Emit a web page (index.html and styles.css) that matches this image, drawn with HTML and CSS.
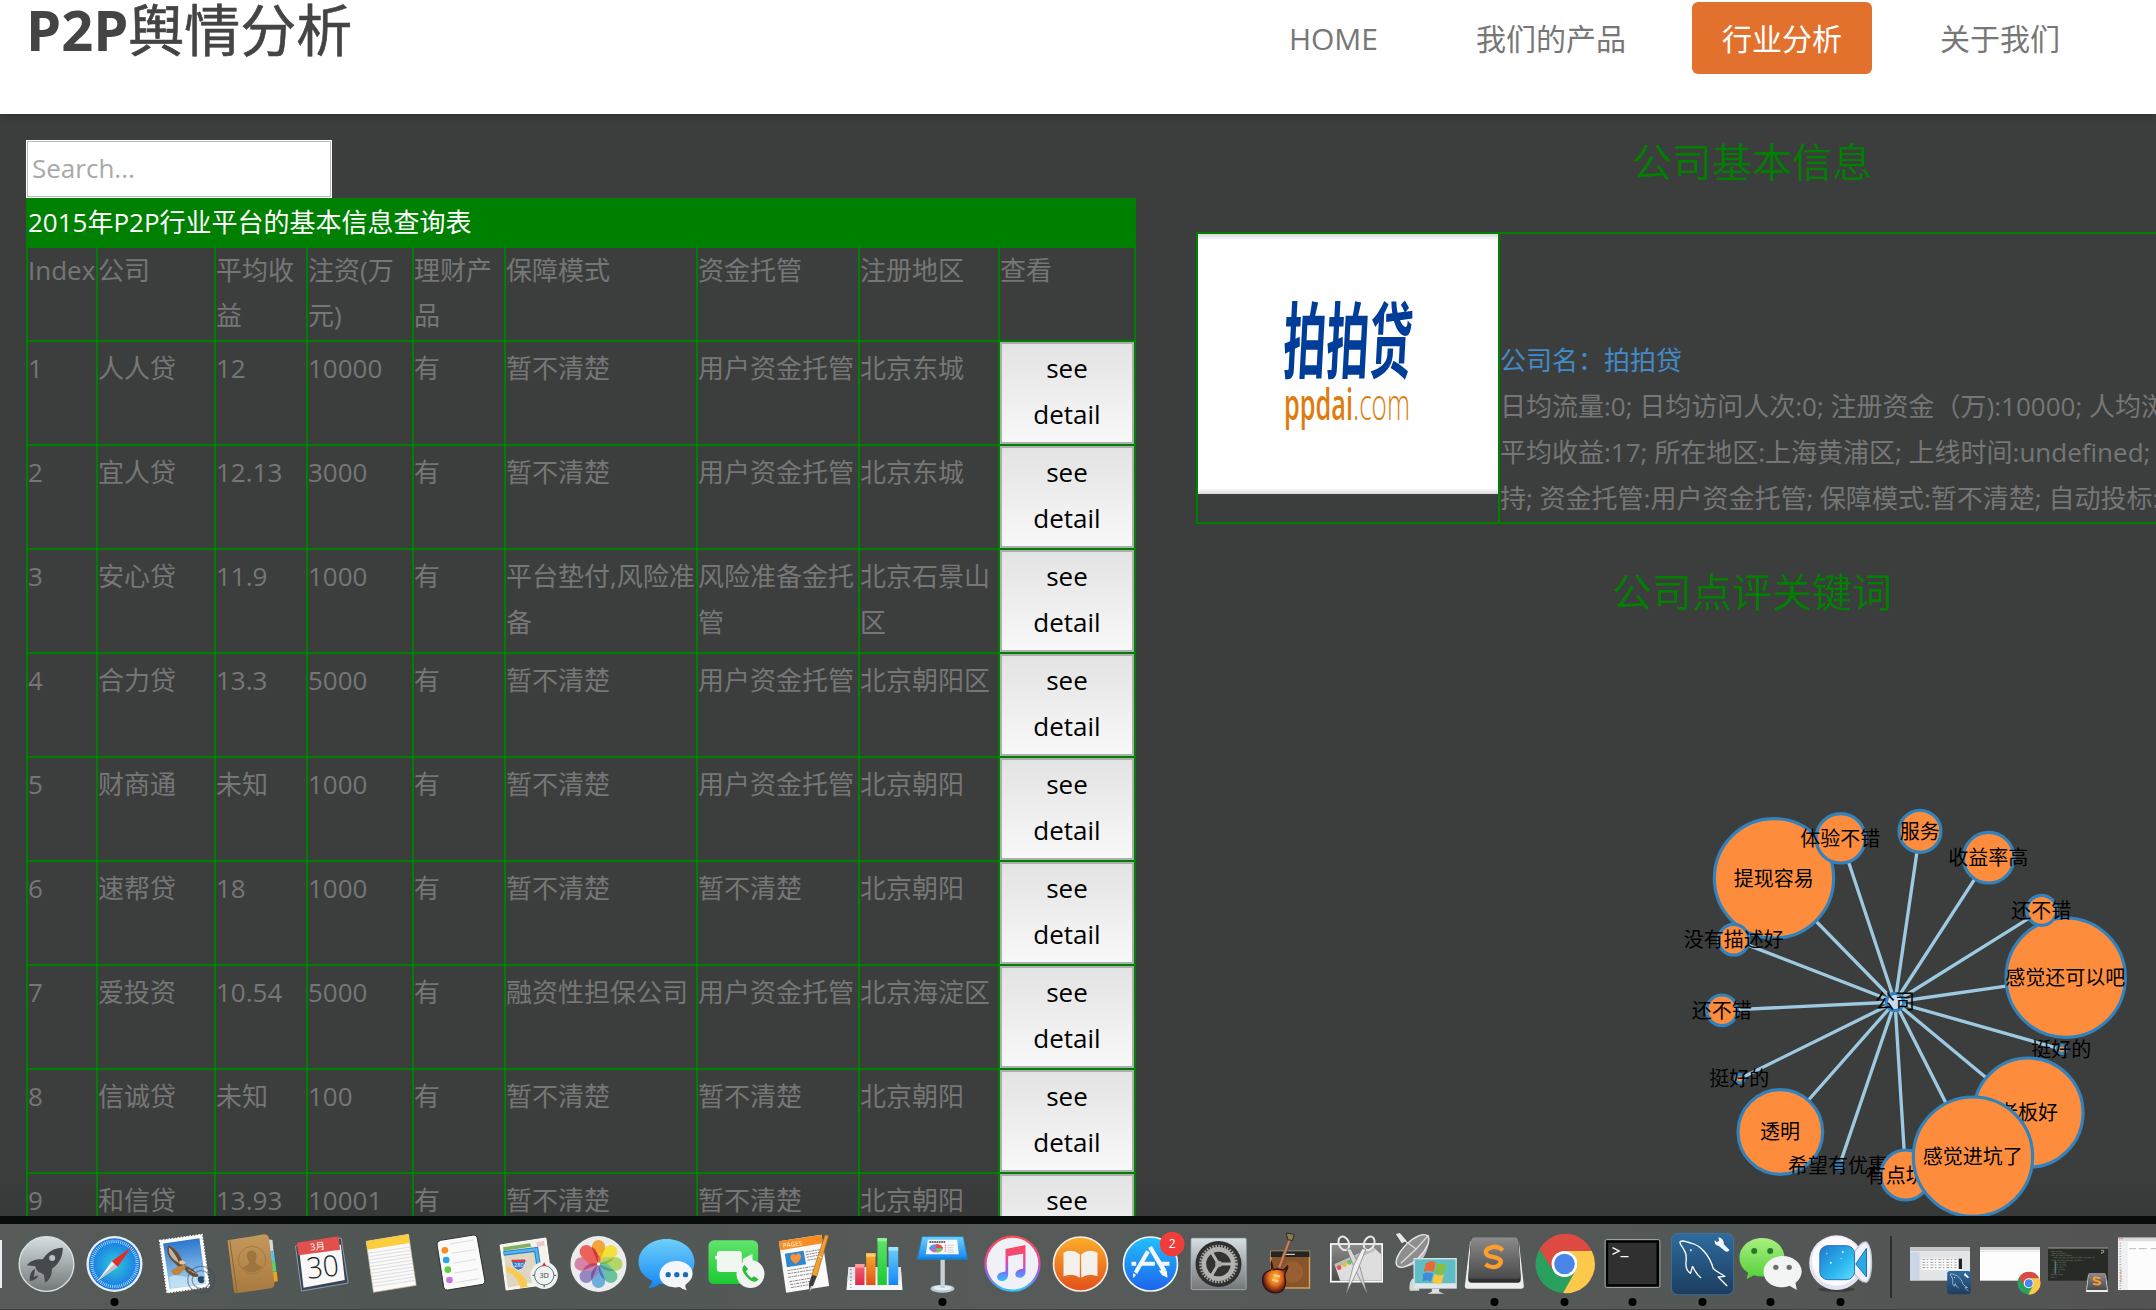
FILE: index.html
```html
<!DOCTYPE html>
<html lang="zh-CN">
<head>
<meta charset="utf-8">
<title>P2P舆情分析</title>
<link rel="stylesheet" href="styles.css">
</head>
<body>
<div class="window">
<header class="header">
  <h1 class="brand"><b>P2P</b>舆情分析</h1>
  <nav class="nav"><a class="home">HOME</a><a>我们的产品</a><a class="active">行业分析</a><a>关于我们</a></nav>
</header>
<main class="main">
  <section class="list">
    <input class="search" type="text" placeholder="Search...">
    <table class="grid">
      <colgroup><col class="c1"><col class="c2"><col class="c3"><col class="c4"><col class="c5"><col class="c6"><col class="c7"><col class="c8"><col class="c9"></colgroup>
      <tr class="title"><td colspan="9">2015年P2P行业平台的基本信息查询表</td></tr>
      <tr class="head"><td>Index</td><td>公司</td><td>平均收益</td><td>注资(万元)</td><td>理财产品</td><td>保障模式</td><td>资金托管</td><td>注册地区</td><td>查看</td></tr>
      <tr><td>1</td><td>人人贷</td><td>12</td><td>10000</td><td>有</td><td>暂不清楚</td><td>用户资金托管</td><td>北京东城</td><td class="act"><button>see<br>detail</button></td></tr>
      <tr><td>2</td><td>宜人贷</td><td>12.13</td><td>3000</td><td>有</td><td>暂不清楚</td><td>用户资金托管</td><td>北京东城</td><td class="act"><button>see<br>detail</button></td></tr>
      <tr><td>3</td><td>安心贷</td><td>11.9</td><td>1000</td><td>有</td><td>平台垫付,风险准备</td><td>风险准备金托管</td><td>北京石景山区</td><td class="act"><button>see<br>detail</button></td></tr>
      <tr><td>4</td><td>合力贷</td><td>13.3</td><td>5000</td><td>有</td><td>暂不清楚</td><td>用户资金托管</td><td>北京朝阳区</td><td class="act"><button>see<br>detail</button></td></tr>
      <tr><td>5</td><td>财商通</td><td>未知</td><td>1000</td><td>有</td><td>暂不清楚</td><td>用户资金托管</td><td>北京朝阳</td><td class="act"><button>see<br>detail</button></td></tr>
      <tr><td>6</td><td>速帮贷</td><td>18</td><td>1000</td><td>有</td><td>暂不清楚</td><td>暂不清楚</td><td>北京朝阳</td><td class="act"><button>see<br>detail</button></td></tr>
      <tr><td>7</td><td>爱投资</td><td>10.54</td><td>5000</td><td>有</td><td>融资性担保公司</td><td>用户资金托管</td><td>北京海淀区</td><td class="act"><button>see<br>detail</button></td></tr>
      <tr><td>8</td><td>信诚贷</td><td>未知</td><td>100</td><td>有</td><td>暂不清楚</td><td>暂不清楚</td><td>北京朝阳</td><td class="act"><button>see<br>detail</button></td></tr>
      <tr><td>9</td><td>和信贷</td><td>13.93</td><td>10001</td><td>有</td><td>暂不清楚</td><td>暂不清楚</td><td>北京朝阳</td><td class="act"><button>see<br>detail</button></td></tr>
    </table>
  </section>
  <section class="detail">
    <h2>公司基本信息</h2>
    <div class="card">
      <div class="pic">
        <svg width="300" height="260" viewBox="0 0 300 260">
          <g transform="translate(84 138) skewX(-3) scale(1 1.9)"><text class="logo-cn" x="0" y="0" font-size="44" textLength="129" lengthAdjust="spacingAndGlyphs">拍拍贷</text></g>
          <text class="logo-en" x="86" y="186" font-size="44" font-weight="600" textLength="69" lengthAdjust="spacingAndGlyphs">ppdai</text>
          <text class="logo-en" x="155" y="186" font-size="44" font-weight="300" textLength="57" lengthAdjust="spacingAndGlyphs">.com</text>
        </svg>
      </div>
      <div class="info">
        <a>公司名：拍拍贷</a>
        <p>日均流量:0; 日均访问人次:0; 注册资金（万):10000; 人均浏览</p>
        <p>平均收益:17; 所在地区:上海黄浦区; 上线时间:undefined; </p>
        <p>持; 资金托管:用户资金托管; 保障模式:暂不清楚; 自动投标:支</p>
      </div>
    </div>
    <h2 class="second">公司点评关键词</h2>
    <svg class="graph" width="496" height="426" viewBox="0 0 1488 1278">
      <g class="link">
        <path d="M705 636L342 265M705 636L542 145M705 636L780 124M705 636L986 203M705 636L1145 361M705 636L1217 563M705 636L1205 778M705 636L1105 968M705 636L939 1100M705 636L737 1155M705 636L538 1127M705 636L361 1026M705 636L239 866M705 636L186 661M705 636L221 449"/>
      </g>
      <g class="node">
        <circle class="hub" cx="705" cy="636" r="26"/><text x="705" y="657">公司</text>
        <circle cx="342" cy="265" r="179"/><text x="341" y="288">提现容易</text>
        <circle cx="542" cy="145" r="74"/><text x="541" y="168">体验不错</text>
        <circle cx="780" cy="124" r="63"/><text x="779" y="147">服务</text>
        <circle cx="986" cy="203" r="76"/><text x="985" y="226">收益率高</text>
        <circle cx="1217" cy="563" r="179"/><text x="1216" y="586">感觉还可以吧</text>
        <circle cx="1145" cy="361" r="45"/><text x="1144" y="384">还不错</text>
        <circle cx="1205" cy="778" r="13"/><text x="1204" y="801">挺好的</text>
        <circle cx="1105" cy="968" r="164"/><text x="1104" y="991">老板好</text>
        <circle cx="361" cy="1026" r="127"/><text x="360" y="1047">透明</text>
        <circle cx="239" cy="866" r="13"/><text x="238" y="889">挺好的</text>
        <circle cx="186" cy="661" r="46"/><text x="185" y="684">还不错</text>
        <circle cx="221" cy="449" r="46"/><text x="221" y="472">没有描述好</text>
        <circle class="spot" cx="538" cy="1127" r="12"/><text x="534" y="1150">希望有优惠</text>
        <circle cx="737" cy="1155" r="75"/><text x="737" y="1178">有点坑爹</text>
        <circle cx="939" cy="1100" r="179"/><text x="938" y="1123">感觉进坑了</text>
      </g>
    </svg>
  </section>
</main>
</div>
<footer class="dock">
<svg width="0" height="0" class="defs"><defs>
  <linearGradient id="silver" x2="0" y2="1"><stop stop-color="#d5dfe2"/><stop offset="1" stop-color="#737778"/></linearGradient>
  <radialGradient id="safari"><stop stop-color="#2cc9dc"/><stop offset="1" stop-color="#1b74e4"/></radialGradient>
  <linearGradient id="sky" x2="0" y2="1"><stop stop-color="#2d78cd"/><stop offset="1" stop-color="#a9d4f2"/></linearGradient>
  <linearGradient id="tan" x2="0" y2="1"><stop stop-color="#c4975a"/><stop offset="1" stop-color="#a97a40"/></linearGradient>
  <linearGradient id="blue" x2="0" y2="1"><stop stop-color="#6fd0fa"/><stop offset="1" stop-color="#1487f6"/></linearGradient>
  <linearGradient id="green" x2="0" y2="1"><stop stop-color="#62e46c"/><stop offset="1" stop-color="#1bc933"/></linearGradient>
  <linearGradient id="orange" x2="0" y2="1"><stop stop-color="#fbae2a"/><stop offset="1" stop-color="#e0501a"/></linearGradient>
  <linearGradient id="red" x2="0" y2="1"><stop stop-color="#f26673"/><stop offset="1" stop-color="#e02a45"/></linearGradient>
  <linearGradient id="tune" x2="0" y2="1"><stop stop-color="#fb4a55"/><stop offset=".45" stop-color="#e94b9b"/><stop offset=".7" stop-color="#8d62f3"/><stop offset="1" stop-color="#29c6f8"/></linearGradient>
  <linearGradient id="store" x2="0" y2="1"><stop stop-color="#22c0f9"/><stop offset="1" stop-color="#1d63ee"/></linearGradient>
  <linearGradient id="navy" x2="0" y2="1"><stop stop-color="#2f6b9e"/><stop offset="1" stop-color="#1c3d5f"/></linearGradient>
  <linearGradient id="key" x2="0" y2="1"><stop stop-color="#8b8b8b"/><stop offset="1" stop-color="#4a4a4a"/></linearGradient>
  <radialGradient id="burst"><stop stop-color="#ffc02e"/><stop offset=".5" stop-color="#e8701f"/><stop offset="1" stop-color="#4e1410"/></radialGradient>
  <linearGradient id="lime" x2="0" y2="1"><stop stop-color="#a8f080"/><stop offset="1" stop-color="#54cf38"/></linearGradient>
  <linearGradient id="aqua" x2="1" y2="1"><stop stop-color="#1d78cc"/><stop offset=".6" stop-color="#2cb7ee"/><stop offset="1" stop-color="#5de0fa"/></linearGradient>
  <g id="dolphin" fill="none" stroke="#fff" stroke-width="4" stroke-linecap="round" stroke-linejoin="round"><path d="M72 93C67 79 55 73 59 65C67 58 80 68 94 70C121 76 148 108 158 145C166 155 181 160 193 169L173 171L199 197M72 93C78 100 78 108 77 121C74 143 82 155 90 160L96 139C103 154 109 164 121 173"/><circle cx="91" cy="91" r="1"/></g>
  <g id="chrome"><circle cx="912" cy="192" r="87" fill="#2aa05e"/><path d="M837 149A87 87 0 0 1 994 153L912 153L878 211Z" fill="#dc4a42"/><path d="M994 153A87 87 0 0 1 908 279L946 211A39 39 0 0 0 912 153Z" fill="#fdc94a"/><circle cx="912" cy="192" r="39" fill="#fff"/><circle cx="912" cy="192" r="31" fill="#4a86ea"/></g>
</defs></svg>
<span class="edge"></span>
<svg class="app" viewBox="34.5 72 207 258"><circle cx="138" cy="192" r="82" fill="url(#silver)" stroke="#d6e2e5" stroke-width="4"/><path d="M187 143C157 144 139 158 127 178C105 177 90 182 79 196L104 199C108 211 112 217 122 219L130 224L134 248C149 238 154 226 154 207C175 192 187 171 187 143ZM104 206C88 213 87 232 88 243C101 242 110 237 114 226L100 231Z" fill="#45494d"/><circle cx="155" cy="174" r="9" fill="#b9c2c5"/></svg>
<svg class="app" viewBox="241.5 72 207 258"><circle cx="342" cy="192" r="84" fill="#e8f0f4"/><circle cx="342" cy="192" r="77" fill="url(#safari)"/><circle cx="342" cy="192" r="68" fill="none" stroke="#c7efff" stroke-width="10" stroke-dasharray="2 3.9"/><path d="M393 141L334 184L351 201Z" fill="#e32b2b"/><path d="M291 243L334 184L351 201Z" fill="#eee"/><path d="M291 243L351 201L342 192Z" fill="#b9bfc4"/><circle class="dot" cx="342" cy="306" r="12"/></svg>
<svg class="app" viewBox="448.5 72 207 258"><g transform="rotate(-8 552 191)"><path d="M488 112H616V270H488Z" fill="#fff" stroke="#fff" stroke-width="5" stroke-dasharray="5 4"/><path d="M497 122H607V260H497Z" fill="url(#sky)"/></g><path d="M505 232C530 214 552 240 575 226C598 222 612 240 618 250L512 264Z" fill="#d7ecf8" opacity=".6"/><path d="M503 136C495 157 506 176 525 191L538 205C548 202 553 206 557 214C573 231 585 233 595 229C588 215 571 203 556 198L547 186C537 162 525 145 503 136Z" fill="#6d4a2b"/><path d="M506 142C519 156 530 171 536 190L521 180C508 169 503 155 506 142Z" fill="#b9b6ae"/><path d="M510 212L537 198L552 194L556 203L536 224L520 225Z" fill="#bd8444"/><path d="M536 183L546 181L556 188L549 194L537 192Z" fill="#e2c9a0"/><path d="M588 222L564 209" stroke="#b59c7b" stroke-width="4"/><g fill="none" stroke="#334b63" stroke-width="4" opacity=".5"><circle cx="602" cy="239" r="40"/><circle cx="602" cy="239" r="27"/></g><path d="M602 229C592 226 590 236 593 244C597 252 608 252 612 243C606 237 612 232 611 230Z" fill="#24486b"/></svg>
<svg class="app" viewBox="655.5 72 207 258"><path d="M804 118L816 120L819 154H804Z" fill="#d8dadb"/><path d="M806 154H820L824 185H808Z" fill="#5ac2e8"/><path d="M810 185L824 184L828 215H812Z" fill="#5cd26b"/><path d="M814 216H829L832 244L815 247Z" fill="#f0a31d"/><path d="M681 121L790 103Q803 103 805 114L822 250Q822 263 811 265L705 280Q701 279 700 272Z" fill="url(#tan)"/><path d="M688 121L710 278" stroke="#8e6534" stroke-width="3"/><circle cx="755" cy="180" r="41" fill="none" stroke="#a47940" stroke-width="3"/><path d="M755 152C741 151 737 162 740 174Q743 184 747 187Q746 195 725 203Q753 232 787 201Q767 195 764 186Q776 155 755 152Z" fill="#9d753f"/></svg>
<svg class="app" viewBox="862.5 72 207 258"><path d="M885 138L1022 114L1043 249L903 273Z" fill="#394552" stroke="#8d9dac" stroke-width="3"/><path d="M896 150L1021 134L1033 240L909 263Z" fill="#f8f8f8"/><path d="M889 128L1014 109L1019 149L894 166Z" fill="#e2504c"/><g transform="rotate(-7 955 180)"><text class="glyph" x="956" y="149" font-size="28" fill="#fff">3月</text><text class="glyph" x="964" y="233" font-size="88" font-weight="300" fill="#222" textLength="96" lengthAdjust="spacingAndGlyphs">30</text></g></svg>
<svg class="app" viewBox="1069.5 72 207 258"><path d="M1097 124L1224 103L1247 256L1119 277Z" fill="#fafafa" stroke="#d5c6a1" stroke-width="2"/><path d="M1097 124L1223 103L1228 129L1101 149Z" fill="#fccd3c"/><path d="M1102 160L1229 141M1103 170L1230 151M1105 180L1232 161M1106 190L1233 171M1108 200L1235 181M1109 210L1236 191M1111 220L1238 201M1112 230L1239 211M1114 240L1241 221M1115 250L1242 231M1117 260L1244 241" stroke="#cfcfcf" stroke-width="2"/></svg>
<svg class="app" viewBox="16.5 72 207 258"><path d="M60 121L159 105Q168 104 170 113L193 241Q194 250 187 253L82 270Q73 272 70 263L50 136Q49 125 60 121Z" fill="#fafafa" stroke="#2f3130" stroke-width="3"/><g stroke="#cecece" stroke-width="2"><path d="M89 132L159 120M93 160L164 149M97 190L167 178M101 219L171 208M105 248L176 236"/></g><circle cx="73" cy="151" r="10" fill="#fb8c20"/><circle cx="77" cy="180" r="10" fill="#24a4f3"/><circle cx="82" cy="209" r="10" fill="#5ed03d"/><circle cx="87" cy="240" r="10" fill="#cb72e0"/></svg>
<svg class="app" viewBox="223.5 72 207 258"><path d="M239 135L376 114L395 251L257 270Z" fill="#f5f2e9" stroke="#fff" stroke-width="3"/><path d="M248 142L329 130L332 140L249 153Z" fill="#7fb262"/><path d="M347 127L370 123L372 137L350 140Z" fill="#f0c5c9"/><path d="M251 164L352 149L368 239L262 263Z" fill="#ded5c2"/><path d="M249 160L347 148L359 227" fill="none" stroke="#2585c6" stroke-width="14"/><path d="M249 160L347 148L359 227" fill="none" stroke="#55b6ef" stroke-width="7"/><path d="M256 199Q289 203 317 239L321 261L300 264C289 234 278 219 259 216Z" fill="#f8cb50"/><path d="M273 179L315 177Q316 207 294 211Q274 206 273 179Z" fill="#3976c6" stroke="#fff" stroke-width="2"/><path d="M273 179H315V186H273Z" fill="#dd3e3e"/><text class="glyph" x="295" y="202" font-size="17" fill="#fff">280</text><circle cx="371" cy="226" r="41" fill="#f1f2f2"/><circle cx="371" cy="226" r="29" fill="none" stroke="#5f7781" stroke-width="3"/><path d="M365 197L371 187L377 197Z" fill="#e22"/><path d="M371 255V262M336 226H341M401 226H407" stroke="#444" stroke-width="3"/><text class="glyph" x="371" y="234" font-size="22" fill="#444">3D</text></svg>
<svg class="app" viewBox="430.5 72 207 258"><circle cx="534" cy="192" r="84" fill="#eaeced"/><g opacity=".87"><rect x="514" y="120" width="40" height="72" rx="20" fill="#f79a21"/><rect x="514" y="120" width="40" height="72" rx="20" fill="#f4df24" transform="rotate(45 534 192)"/><rect x="514" y="120" width="40" height="72" rx="20" fill="#add356" transform="rotate(90 534 192)"/><rect x="514" y="120" width="40" height="72" rx="20" fill="#5abc8d" transform="rotate(135 534 192)"/><rect x="514" y="120" width="40" height="72" rx="20" fill="#5ca4da" transform="rotate(180 534 192)"/><rect x="514" y="120" width="40" height="72" rx="20" fill="#8979bd" transform="rotate(225 534 192)"/><rect x="514" y="120" width="40" height="72" rx="20" fill="#d5749c" transform="rotate(270 534 192)"/><rect x="514" y="120" width="40" height="72" rx="20" fill="#ed4e45" transform="rotate(315 534 192)"/></g><g opacity=".55"><path d="M534 192L514 144V140Q534 148 534 192Z" fill="#a31a12"/><path d="M534 192L554 144Q534 148 534 192Z" fill="#f08a00"/><path d="M534 192L582 172Q570 196 534 192Z" fill="#87a91b"/><path d="M534 192L582 212Q550 218 534 192Z" fill="#318a4a"/><path d="M534 192L554 240Q532 228 534 192Z" fill="#185a9a"/><path d="M534 192L514 240Q504 214 534 192Z" fill="#483b91"/><path d="M534 192L486 212Q500 182 534 192Z" fill="#8d2a72"/></g><circle cx="534" cy="192" r="5" fill="#fff"/></svg>
<svg class="app" viewBox="637.5 72 207 258"><path d="M738 117C692 117 654 147 654 186C654 211 670 231 695 242Q695 253 684 264Q705 262 717 251C776 262 822 231 822 184C820 145 784 117 738 117Z" fill="url(#blue)"/><path d="M768 183C739 183 717 202 717 226C718 251 746 267 778 261Q788 270 799 271Q793 263 795 254C834 229 816 184 768 183Z" fill="#f3f6fa"/><g fill="#1c6db6"><circle cx="743" cy="224" r="8"/><circle cx="769" cy="224" r="8"/><circle cx="795" cy="224" r="8"/></g></svg>
<svg class="app" viewBox="844.5 72 207 258"><rect x="864" y="121" width="149" height="131" rx="16" fill="url(#green)"/><rect x="889" y="153" width="75" height="63" rx="10" fill="#f0f6f0"/><path d="M967 177L996 161V207L967 193ZM884 168H890V178H884Z" fill="#f0f6f0"/><circle cx="990" cy="222" r="42" fill="#f1f5f1"/><path d="M972 195C960 205 967 219 981 233C993 245 1006 250 1014 238L1001 229L993 234Q982 226 976 214L983 207Z" fill="#29bd3c"/></svg>
<svg class="app" viewBox="1051.5 72 207 258"><path d="M1075 124L1203 104L1226 258L1097 278Z" fill="#fafafa"/><path d="M1075 124L1203 104L1207 130L1080 151Z" fill="#f78d23"/><text class="glyph" x="1116" y="140" font-size="19" font-weight="600" fill="#ffe6c9" transform="rotate(-7 1116 136)">PAGES</text><path d="M1093 161L1149 152L1157 193L1099 202Z" fill="#3187cf"/><path d="M1126 192Q1106 181 1111 165Q1119 158 1125 166Q1135 152 1142 168Q1141 181 1126 192Z" fill="#f5943a"/><path d="M1155 156L1205 148M1156 164L1203 156M1158 172L1200 164M1161 181L1195 175M1101 212L1184 198M1102 221L1180 209M1103 232L1177 220M1106 245L1174 234M1109 254L1169 244M1111 263L1164 254" stroke="#8b8b8b" stroke-width="3" stroke-dasharray="9 2 5 2"/><path d="M1214 104L1224 107L1189 229L1174 225Z" fill="#f0a132" stroke="#a66318" stroke-width="2"/><path d="M1174 225L1189 229L1179 255L1167 275L1165 252Z" fill="#3b3c3e"/><path d="M1171 258L1178 259L1167 276Z" fill="#ddd"/><path d="M1195 169L1205 173" stroke="#eee" stroke-width="3"/></svg>
<svg class="app" viewBox="-1.5 72 207 258"><path d="M24 202H181L186 270H18Z" fill="#f6f7f8"/><path d="M24 202H181L183 240H21Z" fill="#e2e5e8"/><path d="M31 207V264" stroke="#999" stroke-width="5" stroke-dasharray="4 7"/><rect x="44" y="192" width="28" height="63" fill="url(#red)"/><rect x="77" y="160" width="28" height="95" fill="url(#orange)"/><rect x="111" y="114" width="28" height="141" fill="url(#green)"/><rect x="144" y="141" width="29" height="114" fill="url(#blue)"/><path d="M44 192H72V203H44Z" fill="#ff9ba0"/><path d="M77 160H105V170H77Z" fill="#ffcf6d"/><path d="M111 114H139V124H111Z" fill="#88f397"/><path d="M144 141H173V152H144Z" fill="#9de3ff"/></svg>
<svg class="app" viewBox="205.5 72 207 258"><ellipse cx="306" cy="266" rx="36" ry="12" fill="#b9c8d1"/><ellipse cx="306" cy="264" rx="28" ry="7" fill="#e5eef2"/><path d="M300 175H313V264H300Z" fill="#c9d0d4"/><path d="M245 110H368L381 177H231Z" fill="url(#blue)" stroke="#168bce" stroke-width="2"/><path d="M231 173H381V179H231Z" fill="#1681c5"/><path d="M262 119H350L355 163H256Z" fill="#f6f8fa"/><path d="M267 126H315" stroke="#333" stroke-width="4" stroke-dasharray="5 2"/><ellipse cx="287" cy="145" rx="20" ry="12" fill="#c95fd0"/><path d="M287 145V133A20 12 0 0 1 307 145Z" fill="#e94b44"/><path d="M287 145H307A20 12 0 0 1 287 157Z" fill="#6dcd59"/><path d="M287 145L267 148A20 12 0 0 1 280 134Z" fill="#36a9df"/><path d="M315 134V158" stroke="#e68" stroke-width="4" stroke-dasharray="3 3"/><path d="M322 136H340M322 143H337M322 150H339M322 156H342" stroke="#bbb" stroke-width="2"/><circle class="dot" cx="306" cy="306" r="12"/></svg>
<svg class="app" viewBox="412.5 72 207 258"><circle cx="516" cy="191" r="81" fill="#f0f1f7" stroke="url(#tune)" stroke-width="7"/><path d="M495 147L555 135V215C554 231 540 237 529 231C519 224 527 207 544 207L548 205V161L503 169V224C502 241 486 247 475 241C463 230 473 216 491 216L495 214Z" fill="url(#tune)"/></svg>
<svg class="app" viewBox="619.5 72 207 258"><circle cx="720" cy="192" r="81" fill="url(#orange)" stroke="#f7ece5" stroke-width="5"/><path d="M718 163Q693 145 669 158V229Q696 218 718 233ZM722 163Q747 145 771 158V229Q745 218 722 233Z" fill="#f4f1ed"/></svg>
<svg class="app" viewBox="826.5 72 207 258"><circle cx="930" cy="192" r="81" fill="url(#store)" stroke="#f2f6f8" stroke-width="5"/><g fill="#f3f7fa"><path d="M873 185H887V197H873ZM900 185H943V197H900ZM960 185H987V197H960Z"/><path d="M917 151L928 157L890 222L880 215ZM878 219L887 225L878 234Z"/><path d="M923 144L934 138L978 210L965 216ZM955 211L979 212L981 233L964 225Z"/></g><circle cx="995" cy="132" r="37" fill="#f13d39"/><text class="glyph" x="995" y="145" font-size="36" fill="#fff">2</text></svg>
<svg class="app" viewBox="1033.5 72 207 258"><rect x="1052" y="115" width="165" height="154" rx="4" fill="url(#silver)" stroke="#b5c6cf" stroke-width="2"/><circle cx="1134" cy="192" r="69" fill="#2f3030"/><circle cx="1134" cy="192" r="54" fill="none" stroke="#aaa9a4" stroke-width="8" stroke-dasharray="5 4"/><circle cx="1134" cy="192" r="44" fill="#333" stroke="#b2b1ad" stroke-width="14"/><path d="M1134 192H1178M1134 192L1111 153M1134 192L1111 230" stroke="#b7b5b1" stroke-width="9"/><circle cx="1134" cy="192" r="10" fill="#aaa"/></svg>
<svg class="app" viewBox="-19.5 72 207 258"><rect x="31" y="154" width="116" height="110" fill="#8a5429" stroke="#d3aa68" stroke-width="4"/><path d="M31 154H147V171H31Z" fill="#242424"/><circle cx="96" cy="216" r="32" fill="#966034"/><path d="M70 163H103" stroke="#eee" stroke-width="3"/><path d="M84 117L91 121L60 205L51 203Z" fill="#c48260" stroke="#79452f" stroke-width="2"/><path d="M77 99L101 103L96 122L82 119Z" fill="#8d7b4c" stroke="#302c22" stroke-width="3"/><path d="M33 186C29 196 37 203 30 211C10 216 4 230 7 249C14 274 38 285 61 275C79 264 76 244 73 229C69 217 85 209 81 198L69 210L50 207L38 209Z" fill="url(#burst)" stroke="#351412" stroke-width="4"/><path d="M40 225L58 230M35 239L53 244" stroke="#e9d096" stroke-width="7"/></svg>
<svg class="app" viewBox="187.5 72 207 258"><rect x="211" y="132" width="154" height="113" fill="url(#key)" stroke="#fff" stroke-width="5"/><path d="M222 193L338 141L362 163V242H239Z" fill="#dedede"/><path d="M222 193L338 141L345 151L228 205Z" fill="#bbb"/><circle cx="236" cy="203" r="7" fill="#ed5145"/><circle cx="252" cy="194" r="7" fill="#f5b74b"/><circle cx="267" cy="187" r="7" fill="#65c65c"/><g fill="none" stroke="#e7e7e7" stroke-width="6"><ellipse cx="250" cy="130" rx="15" ry="21" transform="rotate(-24 250 130)"/><ellipse cx="326" cy="130" rx="15" ry="21" transform="rotate(24 326 130)"/></g><path d="M259 148L270 146L298 199L319 279L285 211Z" fill="#d9d9d9" stroke="#777" stroke-width="2"/><path d="M316 148L305 146L278 199L258 279L291 211Z" fill="#eee" stroke="#777" stroke-width="2"/></svg>
<svg class="app" viewBox="394.5 72 207 258"><path d="M455 236Q443 252 448 272H476V236Z" fill="#d6d6d6"/><path d="M408 171Q405 203 434 201Q470 196 490 172Q508 140 506 104Q478 108 450 130Q420 152 408 171Z" fill="#bdbdbd"/><ellipse cx="456" cy="153" rx="64" ry="27" transform="rotate(-45 456 153)" fill="#8e8e8e" stroke="#e8e8e8" stroke-width="4"/><path d="M425 117L467 147L421 190M467 147L500 110" fill="none" stroke="#ddd" stroke-width="4"/><path d="M406 102L418 99L438 122L424 130Z" fill="#e8e8e8"/><path d="M514 266H536V275L551 281H501L514 275Z" fill="#ddd"/><rect x="461" y="176" width="126" height="88" fill="#5fbdc6" stroke="#d9e3e8" stroke-width="4"/><path d="M462 250H586V264H462Z" fill="#e0e7eb"/><path d="M497 190Q510 180 525 187L519 216Q505 209 489 216Z" fill="#ef6633"/><path d="M529 188Q544 197 558 190L551 219Q538 226 522 217Z" fill="#87bf40"/><path d="M488 221Q503 214 518 221L511 245Q498 238 486 245Z" fill="#3f8cda"/><path d="M521 222Q537 230 550 223L544 249Q529 255 515 246Z" fill="#fac637"/></svg>
<svg class="app" viewBox="601.5 72 207 258"><path d="M629 124H775L790 258Q790 266 782 266H621Q613 266 613 258Z" fill="#ededed"/><path d="M640 111H764Q772 111 774 119L781 237Q781 248 772 248H633Q623 248 623 237L631 119Q632 111 640 111Z" fill="#2e2f2f"/><path d="M641 112H763Q771 112 773 119L780 230Q779 236 772 236H632Q624 236 624 230L632 119Q633 112 641 112Z" fill="url(#key)"/><path d="M727 151Q709 135 690 143C669 150 673 166 693 170C720 175 731 183 712 198Q693 207 675 193" fill="none" stroke="#ff9c2f" stroke-width="13"/><circle class="dot" cx="702" cy="306" r="12"/></svg>
<svg class="app" viewBox="808.5 72 207 258"><use href="#chrome"/><circle class="dot" cx="912" cy="306" r="12"/></svg>
<svg class="app" viewBox="1015.5 72 207 258"><rect x="1034" y="119" width="164" height="143" rx="4" fill="#000" stroke="#aeb7b8" stroke-width="3"/><path d="M1043 128H1188V253H1043Z" fill="#303030"/><path d="M1056 143L1076 153L1056 163M1080 170H1104" fill="none" stroke="#fff" stroke-width="4"/><circle class="dot" cx="1116" cy="306" r="12"/></svg>
<svg class="app" viewBox="22.5 12 207 258"><rect x="33" y="40" width="186" height="184" rx="20" fill="url(#navy)" stroke="#3e79a8" stroke-width="2"/><use href="#dolphin"/><path d="M174 54L176 63L168 66L163 60Q159 75 175 78L194 94Q202 98 207 90L190 73Q190 55 174 52Z" fill="#f1f7fa"/><circle class="dot" cx="126" cy="246" r="12"/></svg>
<svg class="app" viewBox="139.5 72 207 258"><path d="M215 114C176 114 147 141 147 173C147 194 158 208 173 218L168 238L190 226C232 239 281 216 282 173C281 139 252 114 215 114Z" fill="url(#lime)"/><circle cx="191" cy="153" r="9" fill="#287b24"/><circle cx="239" cy="153" r="9" fill="#287b24"/><path d="M276 168C242 168 219 191 219 216C220 250 258 272 297 257L319 270L315 249C355 217 325 168 276 168Z" fill="#f1f4f2"/><circle cx="256" cy="202" r="8" fill="#69706c"/><circle cx="296" cy="202" r="8" fill="#69706c"/><circle class="dot" cx="240" cy="306" r="12"/></svg>
<svg class="app" viewBox="346.5 72 207 258"><ellipse cx="438" cy="268" rx="55" ry="8" fill="#3c3f3e"/><circle cx="438" cy="188" r="82" fill="#e3e3f0"/><circle cx="438" cy="183" r="74" fill="#fafaff"/><path d="M487 163Q514 120 529 127Q543 142 543 187Q543 234 529 246Q513 251 488 216Z" fill="#f1f1fa" stroke="#c5c5d7" stroke-width="4"/><rect x="388" y="137" width="104" height="102" rx="24" fill="url(#aqua)" stroke="#2c6ec2" stroke-width="3"/><path d="M528 145V231L496 192Z" fill="#2ba9e5" stroke="#1c6fb7" stroke-width="3"/><g fill="#d7f6ff"><circle cx="421" cy="188" r="3"/><circle cx="457" cy="156" r="3"/><circle cx="409" cy="161" r="2"/><circle cx="452" cy="175" r="2"/></g><circle class="dot" cx="450" cy="306" r="12"/></svg>
<span class="sep"></span>
<svg class="app" viewBox="648 72 207 258"><rect x="660" y="141" width="180" height="101" fill="#e3e6e8"/><path d="M660 141H840V153H660Z" fill="#c2c4c6"/><path d="M660 157H689V240H660Z" fill="#cbd7e7"/><path d="M694 176H816V209H694Z" fill="#fff"/><path d="M697 179H800M697 187H800M697 195H800M697 203H800" stroke="#999" stroke-width="3" stroke-dasharray="9 4 5 6"/><path d="M806 176H816V207H806Z" fill="#222"/><g transform="translate(759 198) scale(.38)"><rect x="33" y="40" width="186" height="184" rx="20" fill="url(#navy)"/><use href="#dolphin"/><path d="M174 54L168 66Q159 75 175 78L194 94L207 90L190 73Z" fill="#fff"/></g></svg>
<svg class="app" viewBox="855 72 207 258"><rect x="870" y="141" width="180" height="101" fill="#fdfdfd"/><path d="M870 141H1050V150H870Z" fill="#c6c8ca"/><path d="M870 154H1050" stroke="#cfd4da" stroke-width="2"/><g transform="translate(666 176) scale(.384)"><use href="#chrome"/></g></svg>
<svg class="app" viewBox="1062 72 207 258"><rect x="1074" y="141" width="180" height="101" fill="#282a25"/><path d="M1074 141H1254V146H1074Z" fill="#777"/><path d="M1082 154H1117M1086 160H1130M1082 166H1145M1090 173H1215M1086 181H1180M1092 188H1127M1092 195H1133M1092 202H1120M1088 209H1129M1088 216H1110M1082 224H1119M1082 232H1100" stroke="#545f4c" stroke-width="2.500" stroke-dasharray="13 3 7 2"/><path d="M1096 184V223" stroke="#428b9c" stroke-width="3"/><path d="M1233 151H1241V157H1235V162" fill="none" stroke="#ccc" stroke-width="2"/><path d="M1194 224H1248L1254 276H1188Z" fill="#ededed"/><path d="M1196 219H1246L1251 270H1191Z" fill="url(#key)"/><path d="M1231 235Q1210 229 1211 238C1213 245 1232 242 1231 250Q1227 257 1209 251" fill="none" stroke="#ff9c2f" stroke-width="6"/></svg>
<svg class="app" viewBox="1269 72 207 258"><rect x="1284" y="113" width="180" height="157" fill="#fcfcfc"/><path d="M1284 113H1464V124H1284Z" fill="#dadada"/><path d="M1284 124H1314V270H1284Z" fill="#eff0f1"/><path d="M1291 128V270" stroke="#aaa" stroke-width="5" stroke-dasharray="3 5"/><path d="M1293 211V250" stroke="#e58c77" stroke-width="4" stroke-dasharray="4 4"/><path d="M1318 146H1338M1346 146H1370M1382 146H1398" stroke="#bbb" stroke-width="3"/><path d="M1287 116H1299" stroke="#e8665b" stroke-width="3" stroke-dasharray="3 2"/></svg>
</footer>
</body>
</html>
```
FILE: styles.css
```css
* { box-sizing: border-box; }
body {
  margin: 0;
  width: 2156px;
  height: 1310px;
  overflow: hidden;
  display: flex;
  flex-direction: column;
  background: #080d0b;
  font-family: "Open Sans", "Noto Sans CJK SC", sans-serif;
  font-size: 26px;
  line-height: 46px;
  color: #767676;
}
.window {
  flex: none;
  height: 1216px;
  overflow: hidden;
  background: linear-gradient(#3c3e3d 95%, #383a39);
  display: flex;
  flex-direction: column;
}
.header {
  position: relative;
  flex: none;
  height: 114px;
  background: #fff;
  display: flex;
  justify-content: space-between;
  align-items: flex-start;
  padding: 0 66px 0 26px;
  box-shadow: 0 1px 8px rgba(0, 0, 0, .25);
}
.brand {
  margin: 0;
  font-size: 56px;
  line-height: 58px;
  font-weight: 400;
  color: #444;
  -webkit-text-stroke: 0.6px #444;
}
.brand b { font-weight: 700; -webkit-text-stroke: 0; }
.nav { display: flex; padding-top: 2px; }
.nav a {
  height: 72px;
  margin-left: 36px;
  padding: 0 30px;
  font-size: 30px;
  line-height: 73px;
  color: #777;
}
.nav .home { margin-right: 2px; }
.nav .active { margin-right: 2px; background: #e2712d; color: #fff; border-radius: 6px; }
.main { flex: 1; display: flex; min-height: 0; }
.list { flex: none; width: 1196px; padding: 26px 0 0 26px; }
.search {
  display: block;
  width: 306px;
  height: 58px;
  border: 1px solid #fff;
  outline: 1px solid #bbb;
  outline-offset: -2px;
  padding: 0 0 2px 5px;
  background: #fff;
  font: inherit;
}
.search::placeholder { color: #a9a9a9; opacity: 1; }
.grid { width: 1110px; table-layout: fixed; border-spacing: 0; line-height: 46px; }
.c1 { width: 70px; } .c2 { width: 118px; } .c3 { width: 92px; }
.c4 { width: 106px; } .c5 { width: 92px; } .c6 { width: 192px; }
.c7 { width: 162px; } .c8 { width: 140px; } .c9 { width: 138px; }
.grid td {
  height: 104px;
  padding: 3px 0 0;
  vertical-align: top;
  border-left: 2px solid green;
  border-top: 2px solid green;
}
.grid td:last-child { border-right: 2px solid green; }
.grid .title td { height: 48px; padding: 0; line-height: 44px; background: green; color: #fff; }
.grid .head td { height: 94px; padding: 0; line-height: 45px; }
.grid .act { padding: 0; }
.act button {
  display: block;
  width: 134px;
  height: 102px;
  padding: 0 0 4px;
  border: 2px solid #adadad;
  background: linear-gradient(#e3e3e3, #f8f8f8);
  font: inherit;
  color: #000;
}
.detail { flex: none; width: 1112px; padding-top: 20px; }
.detail h2 {
  margin: 0;
  height: 98px;
  font-size: 40px;
  line-height: 55px;
  font-weight: 350;
  text-align: center;
  color: green;
}
.detail h2.second { margin-top: 40px; height: 226px; }
.card { display: flex; height: 292px; border: 2px solid green; }
.pic { flex: none; width: 302px; border-right: 2px solid green; }
.pic svg {
  display: block;
  background: linear-gradient(#d8d8d8, #fff 6px, #fff 254px, #d8d8d8);
}
.logo-cn, .logo-en { font-family: "Open Sans", "Noto Sans CJK SC", sans-serif; }
.logo-cn { font-weight: 700; fill: #003d98; }
.logo-en { fill: #dd7d10; }
.info { padding-top: 103px; white-space: nowrap; }
.info a { display: block; color: #428bca; }
.info p { margin: 0; }
.graph { display: block; margin-left: 464px; }
.link { stroke: #9ecae1; stroke-width: 10; }
.node circle { fill: #fd8d3c; stroke: #3182bd; stroke-width: 9.5; }
.node .hub { fill: #c6dbef; }
.node .spot { fill: #3182bd; }
.node text { font-size: 60px; text-anchor: middle; fill: #000; }
.dock {
  flex: none;
  height: 86px;
  margin-top: 8px;
  border-bottom: 1px solid #3c403e;
  display: flex;
  background: linear-gradient(90deg, #575c5a, #505653 18%, #565b59 50%, #535755 80%, #535353);
}
.defs { position: absolute; }
.edge { flex: none; width: 2px; height: 48px; margin: 16px 9.5px 0 0; background: #e9f1f7; }
.app { flex: none; display: block; width: 69px; height: 86px; }
.dot { fill: #000; }
.glyph { text-anchor: middle; }
.sep { flex: none; width: 2px; height: 62px; margin: 12px 14px 0 15.5px; background: #2c2e2d; }
```
